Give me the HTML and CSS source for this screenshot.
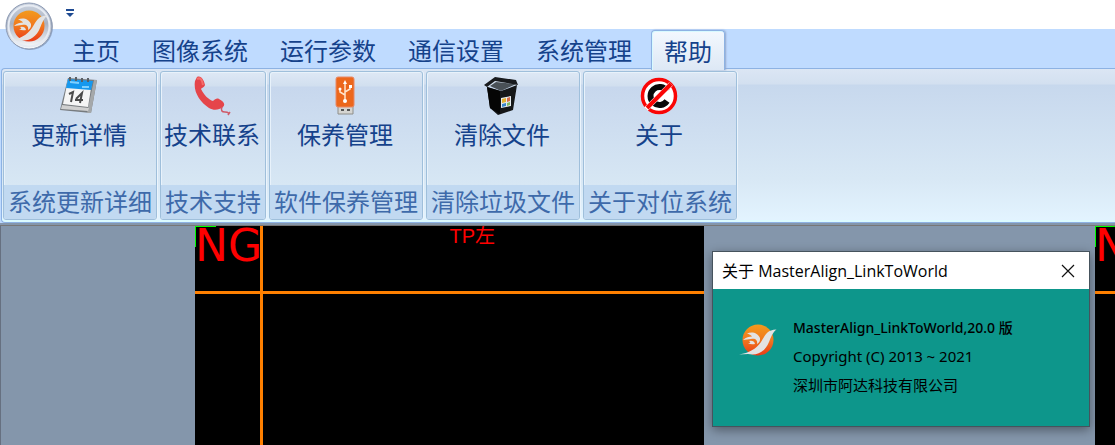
FILE: index.html
```html
<!DOCTYPE html>
<html lang="zh-CN">
<head>
    <meta charset="UTF-8">
    <meta name="viewport" content="width=device-width, initial-scale=1.0">
    <title>MasterAlign_LinkToWorld</title>
    <link rel="stylesheet" href="styles.css">
</head>
<body>
    <!-- Logo partagé -->
    <svg class="defs" width="0" height="0" aria-hidden="true">
        <defs>
            <linearGradient id="sun" x1="0" y1="0" x2="0" y2="1">
                <stop offset="0" stop-color="#f39a1c"/>
                <stop offset="0.5" stop-color="#f1781f"/>
                <stop offset="1" stop-color="#ea3a17"/>
            </linearGradient>
            <symbol id="logo" viewBox="0 0 38 32">
                <circle cx="19" cy="16" r="15.5" fill="url(#sun)"/>
                <path d="M0 30.500C10 29 17 25 22 18C27 10 28 6 37.500 5.500C34 8 32 13 30 18C26 28 18 32 9 30Z" fill="#e3e3e3"/>
                <path d="M4 16C7 13 10 12.500 13 12.500C12 11 10 10 8 9.500C13 7 19 9 21 14C21.500 17 20 19 18 20C19 16 16 14 12 15C9 15 7 16 4 16Z" fill="#e3e3e3"/>
                <path d="M10 17Q15 16 16 20Q12 21 9 19Q13 19 10 17Z" fill="#e3e3e3"/>
            </symbol>
        </defs>
    </svg>

    <header class="ribbon">
        <div class="title-bar">
            <button class="app-button" aria-label="菜单">
                <svg viewBox="0 0 50 50">
                    <defs>
                        <linearGradient id="orb" x1="0" y1="0" x2="0" y2="1">
                            <stop offset="0" stop-color="#cbd3df"/>
                            <stop offset="0.450" stop-color="#a9b2c2"/>
                            <stop offset="1" stop-color="#ffffff"/>
                        </linearGradient>
                    </defs>
                    <circle cx="26" cy="26" r="23" fill="#60708c" opacity="0.5"/>
                    <circle cx="25" cy="25" r="23" fill="url(#orb)" stroke="#8b99b3"/>
                    <circle cx="25" cy="25" r="20.500" fill="none" stroke="#e6ebf3" stroke-width="2"/>
                    <use href="#logo" x="6" y="9" width="38" height="32"/>
                </svg>
            </button>
            <button class="quick-menu" aria-label="自定义快速访问工具栏">
                <svg width="8" height="10" viewBox="0 0 8 10">
                    <path d="M0 1H8V3H0Z M0 5H8L4 9Z" fill="#1e4a92"/>
                </svg>
            </button>
        </div>

        <nav class="tabs">
            <button class="tab">主页</button>
            <button class="tab">图像系统</button>
            <button class="tab">运行参数</button>
            <button class="tab">通信设置</button>
            <button class="tab">系统管理</button>
            <button class="tab active">帮助</button>
        </nav>

        <div class="panel">
            <section class="group">
                <button class="tool">
                    <svg class="icon" viewBox="0 0 40 40">
                        <path d="M9 2L38 4L32 37L1 34Z" fill="#777b7f"/>
                        <path d="M35 4L38 4L32 37L28 37Z" fill="#a5a8aa"/>
                        <path d="M3 29L30 32L29 35L2 33Z" fill="#d0d0d0"/>
                        <path d="M9 4L33 6L29 31L4 28Z" fill="#f5f5f5"/>
                        <path d="M9 3L34 5L32 14L7 12Z" fill="#1698ee"/>
                        <path d="M11 6L20 7M23 11H30" stroke="#7fd0ff" stroke-width="2"/>
                        <path d="M11 1V5M17 1V5M23 2V6M29 2V6" stroke="#5a6066" stroke-width="2"/>
                        <path d="M10 18L14 16L12 26M17 23L23 17L21 27M16 24H24" fill="none" stroke="#4a4a4a" stroke-width="2"/>
                    </svg>
                    <span>更新详情</span>
                </button>
                <h2>系统更新详细</h2>
            </section>
            <section class="group">
                <button class="tool">
                    <svg class="icon" viewBox="0 0 40 40">
                        <path d="M5 1C9 -1 12 4 13 9C12 12 9 12 9 13C12 19 17 24 21 25C23 23 25 22 27 23C31 25 34 28 31 31C27 34 22 35 17 32C8 26 1 16 3 5Z" fill="#e5454a"/>
                        <path d="M5 3C9 1 10 4 11 9" fill="none" stroke="#f56d6b" stroke-width="2"/>
                        <path d="M30 31Q28 36 33 36T36 39L38 36" fill="none" stroke="#cf5a68" stroke-width="1.500"/>
                    </svg>
                    <span>技术联系</span>
                </button>
                <h2>技术支持</h2>
            </section>
            <section class="group">
                <button class="tool">
                    <svg class="icon" viewBox="0 0 40 40">
                        <path d="M13 29H28V38H13Z" fill="#d5d5d2" stroke="#8e8e8a"/>
                        <path d="M16 34H19M22 34H25" stroke="#555" stroke-width="2"/>
                        <rect x="11" y="1" width="18" height="30" rx="2" fill="#ec671c" stroke="#e88a69"/>
                        <path d="M20 25V6M20 19L15 16V12M20 16L25 13V10" fill="none" stroke="#ffe3cb" stroke-width="1.500"/>
                        <path d="M18 8L20 4L22 8Z" fill="#fff"/>
                        <circle cx="20" cy="25" r="2" fill="#fff"/>
                        <circle cx="15" cy="13" r="1.500" fill="#fff"/>
                        <path d="M24 9H27V12H24Z" fill="#fff"/>
                    </svg>
                    <span>保养管理</span>
                </button>
                <h2>软件保养管理</h2>
            </section>
            <section class="group">
                <button class="tool">
                    <svg class="icon" viewBox="0 0 40 40">
                        <path d="M5 11L19 15L35 9L31 34L16 39L8 32Z" fill="#151719"/>
                        <path d="M5 11L18 15V38L8 32Z" fill="#050505"/>
                        <path d="M8 10L14 6L34 8L19 15Z" fill="#4a5157"/>
                        <path d="M2 9L13 1L34 4L36 9L13 5L5 11Z" fill="#191b1e"/>
                        <path d="M19 22L29 20V30L19 32Z" fill="#e7edf0"/>
                        <path d="M20 23L24 22V26L20 27Z" fill="#e4b12f"/>
                        <path d="M25 22L28 21V25L25 26Z" fill="#d46c49"/>
                        <path d="M20 28L24 27V30L20 31Z" fill="#3884ca"/>
                        <path d="M25 27L28 26V29L25 30Z" fill="#82b862"/>
                    </svg>
                    <span>清除文件</span>
                </button>
                <h2>清除垃圾文件</h2>
            </section>
            <section class="group">
                <button class="tool">
                    <svg class="icon" viewBox="0 0 40 40">
                        <circle cx="20" cy="20" r="16.500" fill="#fff" stroke="#fa0505" stroke-width="3.500"/>
                        <path d="M28 15A9 9 0 1 0 28 25" fill="none" stroke="#090909" stroke-width="6"/>
                        <path d="M7 33L32 8" stroke="#fff" stroke-width="5"/>
                        <path d="M8 32L32 8" stroke="#fa0505" stroke-width="4"/>
                    </svg>
                    <span>关于</span>
                </button>
                <h2>关于对位系统</h2>
            </section>
        </div>
    </header>

    <main class="workspace">
        <section class="camera camera-left">
            <span class="result">NG</span>
            <span class="caption">TP左</span>
        </section>
        <section class="camera camera-right">
            <span class="result">NG</span>
        </section>

        <div class="dialog" role="dialog" aria-labelledby="dialog-title">
            <div class="dialog-bar">
                <h1 id="dialog-title">关于 MasterAlign_LinkToWorld</h1>
                <button class="close" aria-label="关闭">
                    <svg width="14" height="14" viewBox="0 0 14 14">
                        <path d="M1 1L13 13M13 1L1 13" stroke="#111" stroke-width="1.200"/>
                    </svg>
                </button>
            </div>
            <div class="dialog-body">
                <svg class="dialog-logo" viewBox="0 0 38 32"><use href="#logo"/></svg>
                <div class="about">
                    <p class="version">MasterAlign_LinkToWorld,20.0 版</p>
                    <p>Copyright (C) 2013 ~ 2021</p>
                    <p>深圳市阿达科技有限公司</p>
                </div>
            </div>
        </div>
    </main>
</body>
</html>
```

FILE: styles.css
```css
* {
    box-sizing: border-box;
}

body {
    margin: 0;
    height: 100vh;
    display: flex;
    flex-direction: column;
    overflow: hidden;
    background: #8496ab;
    font-family: "Noto Sans", "Noto Sans CJK SC", sans-serif;
}

h1, h2, p {
    margin: 0;
    font-weight: normal;
}

button {
    padding: 0;
    border: none;
    background: none;
    font: inherit;
    color: inherit;
    cursor: pointer;
}

.defs {
    position: absolute;
}

/* Ruban */
.ribbon {
    flex: none;
    background: #bfdbff;
    font-family: "Noto Sans CJK SC", sans-serif;
    font-size: 24px;
    color: #15428b;
    white-space: nowrap;
}

.title-bar {
    position: relative;
    height: 29px;
    padding: 8px 0 0 66px;
    background: #fff;
}

.app-button {
    position: absolute;
    left: 4px;
    top: 1px;
    width: 50px;
    height: 50px;
}

.app-button svg {
    display: block;
}

.quick-menu {
    display: block;
    height: 10px;
}

.quick-menu svg {
    display: block;
}

.tabs {
    display: flex;
    gap: 6px;
    height: 40px;
    padding: 1px 0 0 59px;
}

.tab {
    height: 39px;
    padding: 0 12px;
    border: 1px solid transparent;
    border-bottom: none;
    line-height: 36px;
}

.tab.active {
    position: relative;
    z-index: 1;
    height: 40px;
    border-color: #8db2e3;
    border-radius: 4px 4px 0 0;
    background: linear-gradient(#f3f8fe, #dde8f5);
    box-shadow: inset 1px 1px 0 #d8faff, 1px 0 2px #93a7cc;
}

.panel {
    display: flex;
    gap: 3px;
    height: 155px;
    margin: -1px 0 0 1px;
    padding: 2px 2px 3px 1px;
    border: 1px solid #8db2e3;
    border-right: none;
    border-radius: 4px 0 0 4px;
    background: linear-gradient(#dbe6f4 0, #d3e0f0 15px, #c7d8ed 16px, #d8e8f5 110px, #e3f4ff 100%);
    box-shadow: inset 0 -2px 0 #dcfbff;
}

.group {
    display: flex;
    flex-direction: column;
    height: 149px;
    border: 1px solid #9fbfdb;
    border-radius: 3px;
    overflow: hidden;
    background: linear-gradient(#dee8f5 0, #d1dfef 14px, #c7d7ed 15px, #d7e7f4 113px);
    box-shadow: inset 1px 1px 0 #e8f2fb, 1px 0 0 #ebf4fc;
}

.tool {
    display: flex;
    flex: 1;
    flex-direction: column;
    align-items: center;
    padding: 4px 2px 0 0;
    line-height: 36px;
}

.icon {
    width: 40px;
    height: 40px;
}

.group h2 {
    height: 34px;
    padding: 0 4px;
    background: #c1d9f1;
    font-size: 24px;
    line-height: 32px;
    color: #3e6aaa;
    text-align: center;
}

/* Zone des caméras */
.workspace {
    position: relative;
    display: grid;
    grid-template-columns: minmax(0, 1fr) 20px;
    column-gap: 391px;
    flex: 1;
    margin-top: 2px;
    padding-left: 194px;
    border-top: 1px solid #777;
    border-left: 1px solid #667080;
    background: #8496ab;
}

.camera {
    position: relative;
    overflow: hidden;
    background: #000;
    color: #f00;
}

/* Repère vert du coin */
.camera::before {
    content: "";
    position: absolute;
    z-index: 1;
    left: 0;
    top: 0;
    width: 20px;
    height: 20px;
    border-top: 1px solid #00ff00;
    border-left: 1px solid #00ff00;
}

/* Croix de visée */
.camera::after {
    content: "";
    position: absolute;
    inset: 0;
    background:
        linear-gradient(#ff8000, #ff8000) 65px 0 / 3px 100% no-repeat,
        linear-gradient(#ff8000, #ff8000) 0 65px / 100% 3px no-repeat;
}

.result {
    position: absolute;
    left: 0;
    top: 0;
    font-family: "DejaVu Sans", sans-serif;
    font-size: 44px;
    line-height: 40px;
}

.caption {
    position: absolute;
    left: 50%;
    top: 0;
    font-family: "Liberation Sans", "Noto Sans CJK SC", sans-serif;
    font-size: 20px;
    line-height: 20px;
}

/* Fenêtre "à propos" */
.dialog {
    position: absolute;
    z-index: 2;
    right: 25px;
    top: 25px;
    width: 378px;
    border: 1px solid #46535d;
    background: #0d968b;
    box-shadow: 0 3px 10px rgba(0, 0, 0, 0.4);
    color: #000;
}

.dialog-bar {
    display: flex;
    align-items: center;
    justify-content: space-between;
    height: 37px;
    padding: 0 14px 0 9px;
    background: #fff;
}

.dialog-bar h1 {
    font-family: "Open Sans", "Noto Sans CJK SC", sans-serif;
    font-size: 16px;
    line-height: 24px;
}

.close svg {
    display: block;
}

.dialog-body {
    display: flex;
    gap: 16px;
    height: 137px;
    padding: 24px 26px;
}

.dialog-logo {
    width: 38px;
    height: 32px;
    margin-top: 11px;
}

.about {
    font-size: 15px;
    line-height: 29px;
    white-space: nowrap;
}

.version {
    font-size: 14px;
    font-weight: 500;
}
```
